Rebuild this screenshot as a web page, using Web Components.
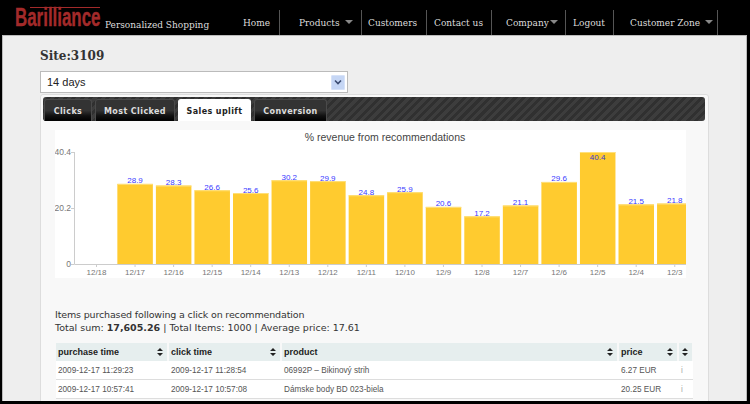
<!DOCTYPE html>
<html>
<head>
<meta charset="utf-8">
<title>Barilliance</title>
<style>
  html, body { margin: 0; padding: 0; height: 404px; overflow: hidden; background: #000; }
</style>
</head>
<body>
<app-shell>
  <top-bar slot="top">
    <nav-item w="55" pad="18" style="margin-left:120px">Home</nav-item>
    <nav-item w="82" pad="19" arrow>Products</nav-item>
    <nav-item w="65" pad="6">Customers</nav-item>
    <nav-item w="65" pad="7">Contact us</nav-item>
    <nav-item w="74" pad="14" arrow tight>Company</nav-item>
    <nav-item w="48" pad="7">Logout</nav-item>
    <nav-item w="104" pad="16" arrow>Customer Zone</nav-item>
  </top-bar>
  <site-title>Site:3109</site-title>
  <range-select>14 days</range-select>
  <main-panel>
    <tab-bar slot="tabs">
      <tab-item w="48">Clicks</tab-item>
      <tab-item w="80">Most Clicked</tab-item>
      <tab-item w="73" active>Sales uplift</tab-item>
      <tab-item w="73">Conversion</tab-item>
    </tab-bar>
    <bar-chart></bar-chart>
    <sales-summary>
      <div class="first" style="letter-spacing:-.15px">Items purchased following a click on recommendation</div>
      <div>Total sum: <b>17,605.26</b> | Total Items: 1000 | Average price: 17.61</div>
    </sales-summary>
    <sales-table></sales-table>
  </main-panel>
</app-shell>

<script>
class AppShell extends HTMLElement {
  connectedCallback() {
    this.attachShadow({ mode: 'open' });
    this.shadowRoot.innerHTML = `
      <style>
        :host { display: block; width: 750px; height: 404px; overflow: hidden; background: #000; }
        .main {
          box-sizing: border-box;
          height: 366px;
          margin: 0 3px 0 2px;
          padding: 10px 0 0 37px;
          background: #eee;
          border: 1px solid #bbb;
          border-width: 1px 1px 0 1px;
          overflow: hidden;
        }
      </style>
      <slot name="top"></slot>
      <div class="main"><slot></slot></div>
    `;
  }
}
customElements.define('app-shell', AppShell);

class TopBar extends HTMLElement {
  connectedCallback() {
    this.attachShadow({ mode: 'open' });
    this.shadowRoot.innerHTML = `
      <style>
        :host { display: flex; height: 35px; background: #000; align-items: flex-end; }
        .brand { width: 105px; height: 35px; flex: none; position: relative; }
        .brand::before {
          content: "";
          position: absolute;
          left: 30px; top: 7px;
          width: 70px; height: 1px;
          background: #a32a2a;
        }
        .logo {
          display: block;
          margin: 5px 0 0 15px;
          color: #a32a2a;
          font: bold 26px/24px "Liberation Sans", sans-serif;
          transform: scale(.65, 1);
          transform-origin: 0 0;
          white-space: nowrap;
          width: 132px;
          -webkit-text-stroke: .4px #a32a2a;
        }
        .tag {
          flex: none;
          width: 0;
          margin-bottom: 4px;
          white-space: nowrap;
          color: #ddd;
          font: 10px/13px "DejaVu Serif", serif;
          font-stretch: condensed;
        }
      </style>
      <div class="brand"><span class="logo">Barilliance</span></div>
      <div class="tag">Personalized Shopping</div>
      <slot></slot>
    `;
  }
}
customElements.define('top-bar', TopBar);

class NavItem extends HTMLElement {
  connectedCallback() {
    this.attachShadow({ mode: 'open' });
    const arrow = this.hasAttribute('arrow');
    const gap = this.hasAttribute('tight') ? 1 : 5;
    this.shadowRoot.innerHTML = `
      <style>
        :host {
          display: flex;
          box-sizing: border-box;
          width: ${this.getAttribute('w')}px;
          padding-left: ${this.getAttribute('pad')}px;
          border-right: 1px solid #555;
          color: #ddd;
          font: 10px/26px "DejaVu Serif", serif;
          font-stretch: condensed;
          white-space: nowrap;
          height: 25px;
        }
        i {
          display: ${arrow ? 'block' : 'none'};
          width: 0; height: 0;
          margin: 10px 0 0 ${gap}px;
          border: 4px solid transparent;
          border-top: 4px solid #888;
          border-bottom: 0;
        }
      </style>
      <slot></slot><i></i>
    `;
  }
}
customElements.define('nav-item', NavItem);

class SiteTitle extends HTMLElement {
  connectedCallback() {
    this.attachShadow({ mode: 'open' });
    this.shadowRoot.innerHTML = `
      <style>
        :host { display: block; height: 25px; color: #333; font: bold 12px/20px "DejaVu Serif", serif; }
      </style>
      <slot></slot>
    `;
  }
}
customElements.define('site-title', SiteTitle);

class RangeSelect extends HTMLElement {
  connectedCallback() {
    this.attachShadow({ mode: 'open' });
    this.shadowRoot.innerHTML = `
      <style>
        :host {
          display: flex;
          box-sizing: border-box;
          width: 308px;
          height: 22px;
          align-items: center;
          justify-content: space-between;
          padding: 0 2px 0 6px;
          background: #fff;
          border: 1px solid #bbb;
          color: #222;
          font: 11px "Liberation Sans", sans-serif;
        }
        .btn {
          width: 12px; height: 13px;
          background: #c5d6f5;
          border: 1px solid #d6e2f8;
          border-radius: 1px;
          display: flex;
          align-items: center;
          justify-content: center;
        }
      </style>
      <slot></slot>
      <span class="btn"><svg width="8" height="6" viewBox="0 0 8 6"><path d="M1 1.5 L4 4.5 L7 1.5" fill="none" stroke="#3a4a70" stroke-width="1.6"/></svg></span>
    `;
  }
}
customElements.define('range-select', RangeSelect);

class MainPanel extends HTMLElement {
  connectedCallback() {
    this.attachShadow({ mode: 'open' });
    this.shadowRoot.innerHTML = `
      <style>
        :host {
          display: block;
          box-sizing: border-box;
          width: 669px;
          height: 320px;
          margin-top: 1px;
          padding: 2px 3px 0 2px;
          background: #f8f8f8;
          border: 1px solid #ddd;
          border-radius: 3px 3px 0 0;
        }
        .body { padding: 9px 0 0 12px; }
      </style>
      <slot name="tabs"></slot>
      <div class="body"><slot></slot></div>
    `;
  }
}
customElements.define('main-panel', MainPanel);

class TabBar extends HTMLElement {
  connectedCallback() {
    this.attachShadow({ mode: 'open' });
    this.shadowRoot.innerHTML = `
      <style>
        :host {
          display: flex;
          box-sizing: border-box;
          height: 24px;
          gap: 3px;
          padding: 2px 0 0 1px;
          border-radius: 3px;
          background: repeating-linear-gradient(135deg, #3d3d3d 0 3px, #303030 3px 6px);
        }
      </style>
      <slot></slot>
    `;
  }
}
customElements.define('tab-bar', TabBar);

class TabItem extends HTMLElement {
  connectedCallback() {
    this.attachShadow({ mode: 'open' });
    const on = this.hasAttribute('active');
    this.shadowRoot.innerHTML = `
      <style>
        :host {
          display: block;
          box-sizing: border-box;
          width: ${this.getAttribute('w')}px;
          height: 22px;
          text-align: center;
          border-radius: 3px 3px 0 0;
          border: 1px solid ${on ? '#fff' : '#4a4a4a'};
          border-bottom: 0;
          background: ${on ? '#fff' : 'linear-gradient(#333 0, #333 50%, #111 75%, #000 100%)'};
          color: ${on ? '#222' : '#ddd'};
          font: bold 8px/23px "DejaVu Sans", sans-serif;
          letter-spacing: .4px;
          white-space: nowrap;
        }
      </style>
      <slot></slot>
    `;
  }
}
customElements.define('tab-item', TabItem);

// chart is a free canvas, drawn as svg with x/y from the data
const CHART_DATA = [
  ['12/18', 0], ['12/17', 28.9], ['12/16', 28.3], ['12/15', 26.6], ['12/14', 25.6],
  ['12/13', 30.2], ['12/12', 29.9], ['12/11', 24.8], ['12/10', 25.9], ['12/9', 20.6],
  ['12/8', 17.2], ['12/7', 21.1], ['12/6', 29.6], ['12/5', 40.4], ['12/4', 21.5], ['12/3', 21.8]
];

class BarChart extends HTMLElement {
  connectedCallback() {
    this.attachShadow({ mode: 'open' });
    const base = 134, scale = 112 / 40.4;
    let bars = '';
    CHART_DATA.forEach(([label, v], i) => {
      const cx = 41.5 + i * 38.55;
      const x = cx - 17.7, h = v * scale, w = Math.min(35.5, 631 - x);
      if (v) {
        bars += `<rect x="${x}" y="${base - h}" width="${w}" height="${h}" fill="#ffcb2f"/>`;
        bars += `<rect x="${x}" y="${base - h}" width="${w}" height="1" fill="#ffe07a"/>`;
        const inside = v > 40;
        bars += `<text x="${cx}" y="${base - h + (inside ? 8 : -0.5)}" text-anchor="middle" fill="${inside ? '#3a3ad0' : '#3a3aff'}" font-size="8">${v}</text>`;
      }
      bars += `<line x1="${cx}" x2="${cx}" y1="${base}" y2="${base + 3}" stroke="#ccc"/>`;
      bars += `<text x="${cx}" y="${base + 11}" text-anchor="middle" fill="#777" font-size="8">${label}</text>`;
    });
    this.shadowRoot.innerHTML = `
      <style>
        :host { display: block; width: 631px; height: 148px; background: #fff; }
        svg { display: block; font-family: "Liberation Sans", sans-serif; }
      </style>
      <svg width="631" height="148" viewBox="0 0 631 148">
        <text x="330" y="11" text-anchor="middle" fill="#444" font-size="10.5">% revenue from recommendations</text>
        <path d="M19.5 22 V134.5 H631" fill="none" stroke="#ccc"/>
        <path d="M16 22.5 H19 M16 78.5 H19 M16 134.5 H19" stroke="#ccc"/>
        <text x="16" y="25" text-anchor="end" fill="#777" font-size="8.5">40.4</text>
        <text x="16" y="81" text-anchor="end" fill="#777" font-size="8.5">20.2</text>
        <text x="16" y="137" text-anchor="end" fill="#777" font-size="8.5">0</text>
        ${bars}
      </svg>
    `;
  }
}
customElements.define('bar-chart', BarChart);

class SalesSummary extends HTMLElement {
  connectedCallback() {
    this.attachShadow({ mode: 'open' });
    this.shadowRoot.innerHTML = `
      <style>
        :host {
          display: block;
          margin-top: 30px;
          height: 35px;
          color: #333;
          font: 9.5px/13px "DejaVu Sans", sans-serif;
        }
      </style>
      <slot></slot>
    `;
  }
}
customElements.define('sales-summary', SalesSummary);

const ROWS = [
  ['2009-12-17 11:29:23', '2009-12-17 11:28:54', '06992P \u2013 Bikinov\u00fd strih', '6.27 EUR', 'i'],
  ['2009-12-17 10:57:41', '2009-12-17 10:57:08', 'D\u00e1mske body BD 023-biela', '20.25 EUR', 'i']
];

class SalesTable extends HTMLElement {
  connectedCallback() {
    this.attachShadow({ mode: 'open' });
    const heads = ['purchase time', 'click time', 'product', 'price', ''];
    const sort = '<svg width="6" height="8" viewBox="0 0 6 8"><path d="M3 0 L6 3 H0 Z M3 8 L0 5 H6 Z" fill="#222"/></svg>';
    const cols = ['113px', '113px', '337px', '60px', '13px'];
    this.shadowRoot.innerHTML = `
      <style>
        :host { display: block; width: 637px; margin-left: 1px; }
        .row { display: grid; grid-template-columns: ${cols.join(' ')}; }
        .h > div {
          height: 18px;
          margin-right: 2px;
          background: #e6eeee;
          display: flex;
          justify-content: space-between;
          align-items: center;
          padding: 0 4px 0 2px;
          box-sizing: border-box;
          color: #222;
          font: bold 9px "Liberation Sans", sans-serif;
        }
        .h > div:last-child { margin-right: 0; padding: 0 0 0 3px; justify-content: flex-start; }
        .r { border-bottom: 1px solid #ddd; background: #fff; height: 18px; align-items: center; }
        .r > div {
          padding-left: 2px;
          color: #555;
          font: 8.2px "Liberation Sans", sans-serif;
          white-space: nowrap;
        }
        .r > div:last-child { color: #aaa; }
      </style>
      <div class="row h">${heads.map(t => `<div>${t ? `<span>${t}</span>` : ''}${sort}</div>`).join('')}</div>
      ${ROWS.map(r => `<div class="row r">${r.map(c => `<div>${c}</div>`).join('')}</div>`).join('')}
    `;
  }
}
customElements.define('sales-table', SalesTable);
</script>
</body>
</html>
